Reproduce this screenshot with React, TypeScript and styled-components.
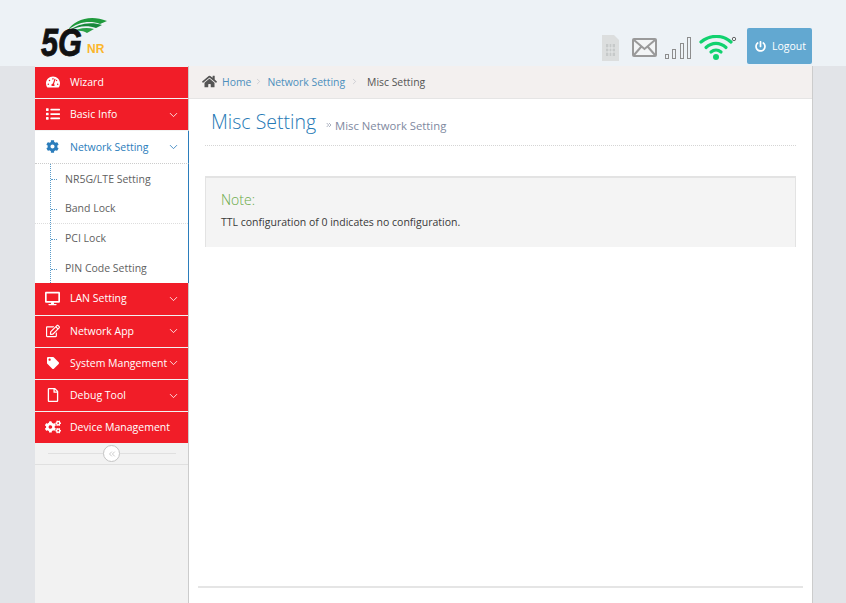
import { ReactNode } from "react";
import styled, { createGlobalStyle } from "styled-components";
import { ChevronDown, ChevronRight, ChevronsLeft, ChevronsRight } from "lucide-react";
import {
  FaCog,
  FaCogs,
  FaDesktop,
  FaHome,
  FaList,
  FaPowerOff,
  FaRegEdit,
  FaRegFile,
  FaTachometerAlt,
  FaTag,
} from "react-icons/fa";

const GlobalStyle = createGlobalStyle`
  html, body {
    margin: 0;
    padding: 0;
    height: 100%;
    overflow: hidden;
    background: #e2e4e8;
    font-family: "Open Sans", "Liberation Sans", sans-serif;
    font-size: 10.5px;
  }
  * { box-sizing: border-box; }
`;

const Page = styled.div`
  width: 846px;
  height: 603px;
  display: flex;
  flex-direction: column;
  overflow: hidden;
`;

const Header = styled.header`
  height: 66px;
  flex: none;
  background: #edf2f6;
  display: flex;
  justify-content: space-between;
  padding: 0 34px 0 40px;
`;

const Logo = styled.svg`
  width: 70px;
  height: 46px;
  margin-top: 15px;
`;

const LogoFive = styled.text`
  font-family: "Liberation Sans", sans-serif;
  font-weight: 700;
  font-style: italic;
  font-size: 38px;
  fill: #111;
  stroke: #111;
  stroke-width: 0.8px;
`;

const LogoNr = styled.text`
  font-family: "Liberation Sans", sans-serif;
  font-weight: 700;
  font-size: 12px;
  fill: #fbb62c;
`;

const Tools = styled.div`
  display: flex;
  align-items: flex-start;
  padding-top: 28px;
`;

const ToolIcon = styled.svg<{ $left: number; $top: number }>`
  display: block;
  flex: none;
  margin-left: ${(p) => p.$left}px;
  margin-top: ${(p) => p.$top}px;
`;

const LogoutButton = styled.button`
  width: 65px;
  height: 36px;
  margin-left: 10px;
  border: 0;
  border-radius: 2px;
  background: #62a8d1;
  color: #fff;
  font: inherit;
  font-size: 10.5px;
  display: flex;
  align-items: center;
  justify-content: center;
  gap: 6px;
  padding: 0 0 0 2px;
`;

const Body = styled.div`
  flex: 1;
  width: 778px;
  margin-left: 35px;
  display: flex;
  min-height: 0;
`;

const Sidebar = styled.aside`
  width: 154px;
  flex: none;
  background: #f2f2f2;
  border-right: 1px solid #ccc;
  padding-top: 1px;
`;

const NavRow = styled.div<{ $active?: boolean }>`
  height: ${(p) => (p.$active ? 32 : 31.2)}px;
  margin-bottom: ${(p) => (p.$active ? 0 : 1)}px;
  padding-bottom: 1px;
  display: flex;
  align-items: center;
  background: ${(p) => (p.$active ? "#fff" : "#f11d28")};
  color: ${(p) => (p.$active ? "#2b7dbc" : "#fff")};
  border-right: ${(p) => (p.$active ? "1px solid #2b7dbc" : "0")};
  position: relative;
  width: ${(p) => (p.$active ? 154 : 153)}px;
`;

const NavIcon = styled.span<{ $size?: number }>`
  width: 35px;
  flex: none;
  display: flex;
  justify-content: center;
  font-size: ${(p) => p.$size ?? 14}px;
`;

const NavLabel = styled.span`
  flex: 1;
  white-space: nowrap;
  font-size: 10.5px;
`;

const NavCaret = styled.span`
  position: absolute;
  right: 8px;
  top: 50%;
  transform: translateY(-50%);
  display: flex;
`;

const SubList = styled.div`
  width: 154px;
  background: #fff;
  border-top: 1px dotted #ccc;
  border-right: 1px solid #2b7dbc;
  position: relative;
  &::before {
    content: "";
    position: absolute;
    left: 15px;
    top: 0;
    bottom: 0;
    border-left: 1px dotted #5a9bc9;
  }
`;

const SubRow = styled.div<{ $rule?: boolean }>`
  height: 29.75px;
  padding: 0 0 1px 30px;
  display: flex;
  align-items: center;
  color: #616161;
  font-size: 10.5px;
  position: relative;
  border-bottom: ${(p) => (p.$rule ? "1px dotted #ddd" : "0")};
  &::before {
    content: "";
    position: absolute;
    left: 16px;
    top: 50%;
    width: 6px;
    border-top: 1px dotted #5a9bc9;
  }
`;

const Collapse = styled.div`
  height: 22px;
  width: 153px;
  margin-top: -1px;
  border-bottom: 1px solid #e0e0e0;
  display: flex;
  align-items: center;
  justify-content: center;
  position: relative;
  &::before {
    content: "";
    position: absolute;
    left: 13px;
    right: 12px;
    top: 10px;
    border-top: 1px solid #e0e0e0;
  }
`;

const CollapseKnob = styled.span`
  position: relative;
  width: 17px;
  height: 17px;
  border-radius: 50%;
  border: 1px solid #c4c4c4;
  background: #fff;
  color: #aaa;
  display: flex;
  align-items: center;
  justify-content: center;
`;

const Main = styled.main`
  flex: 1;
  min-width: 0;
  background: #fff;
  border-right: 1px solid #ccc;
  display: flex;
  flex-direction: column;
`;

const Crumbs = styled.nav`
  height: 33px;
  flex: none;
  background: #f3f0ef;
  border-bottom: 1px solid #e5e5e5;
  display: flex;
  align-items: center;
  padding: 0 0 1px 13px;
  font-size: 10.4px;
  color: #555;
  white-space: nowrap;
`;

const CrumbHome = styled.span`
  display: flex;
  color: #555;
  font-size: 15px;
  margin-right: 5px;
`;

const CrumbLink = styled.span`
  color: #4c8fbd;
`;

const CrumbSep = styled.span<{ $wide?: boolean }>`
  display: flex;
  color: #b2b6bf;
  margin: 0 ${(p) => (p.$wide ? 8 : 4)}px 0 ${(p) => (p.$wide ? 5 : 3)}px;
`;

const Content = styled.div`
  flex: 1;
  padding: 0 16px;
  display: flex;
  flex-direction: column;
`;

const PageHead = styled.div`
  height: 47px;
  padding: 8px 0 0 6px;
  border-bottom: 1px dotted #d5d5d5;
  display: flex;
  align-items: baseline;
  white-space: nowrap;
`;

const Title = styled.h1`
  margin: 0;
  font-size: 19.5px;
  font-weight: 300;
  line-height: 30px;
  color: #2679b5;
`;

const SubTitle = styled.small`
  margin-left: 9px;
  font-size: 11.3px;
  color: #8089a0;
  display: flex;
  align-items: center;
  gap: 2px;
`;

const Note = styled.section`
  margin-top: 30px;
  height: 71px;
  background: #f4f4f4;
  border: 1px solid #e3e3e3;
  border-bottom: 0;
  border-top-width: 2px;
  padding: 12px 15px;
`;

const NoteTitle = styled.h3`
  margin: 0;
  font-size: 14px;
  line-height: 20px;
  font-weight: 300;
  color: #69aa46;
`;

const NoteText = styled.p`
  margin: 5px 0 0;
  font-size: 10.5px;
  line-height: 15px;
  color: #393939;
`;

const Footer = styled.div`
  margin: auto -7px 15px -7px;
  border-top: 2px solid #e5e5e5;
  height: 0;
`;

type NavItem = { label: string; icon: ReactNode; caret?: boolean; iconSize?: number };

const topItems: NavItem[] = [
  { label: "Wizard", icon: <FaTachometerAlt /> },
  { label: "Basic Info", icon: <FaList />, caret: true },
];

const bottomItems: NavItem[] = [
  { label: "LAN Setting", icon: <FaDesktop />, iconSize: 15, caret: true },
  { label: "Network App", icon: <FaRegEdit />, caret: true },
  { label: "System Mangement", icon: <FaTag />, iconSize: 12, caret: true },
  { label: "Debug Tool", icon: <FaRegFile />, caret: true },
  { label: "Device Management", icon: <FaCogs />, iconSize: 16 },
];

const subItems = [
  { label: "NR5G/LTE Setting" },
  { label: "Band Lock", rule: true },
  { label: "PCI Lock" },
  { label: "PIN Code Setting" },
];

function Nav({ item }: { item: NavItem }) {
  return (
    <NavRow>
      <NavIcon $size={item.iconSize}>{item.icon}</NavIcon>
      <NavLabel>{item.label}</NavLabel>
      {item.caret && (
        <NavCaret>
          <ChevronDown size={13} strokeWidth={1.5} />
        </NavCaret>
      )}
    </NavRow>
  );
}

function App() {
  return (
    <Page>
      <GlobalStyle />
      <Header>
        <Logo viewBox="0 0 70 46">
          <path d="M28 15C34 5 50 -1 67 6L60 9C50 5 38 7 28 15Z" fill="#1f9a3c" />
          <path d="M29 16C37 9 50 6 62 10L56 13C47 10 38 11 29 16Z" fill="#17873a" />
          <path d="M30 18C37 13 47 12 54 14L47 18C42 15 36 15 30 18Z" fill="#2aa046" />
          <LogoFive x="1" y="41" textLength="41" lengthAdjust="spacingAndGlyphs">
            5G
          </LogoFive>
          <LogoNr x="47" y="38">
            NR
          </LogoNr>
        </Logo>
        <Tools>
          {/* sim card */}
          <ToolIcon $left={0} $top={7} width="19" height="26" viewBox="0 0 19 26">
            <path d="M1 0h12l5 5v21H1z" fill="#dcdede" />
            <path d="M5 9h9v12H5z" fill="#c6c9c9" />
            <path d="M8 9v12M11 9v12M5 13h9M5 17h9" stroke="#e6e8e8" strokeWidth="1" />
          </ToolIcon>
          {/* mail */}
          <ToolIcon $left={12} $top={10} width="25" height="20" viewBox="0 0 25 20">
            <rect x="1" y="1" width="23" height="17" rx="1" fill="#f3f5f6" stroke="#9a9a9a" strokeWidth="2" />
            <path d="M2 2l10.500 9L23 2M2 17l7-8M23 17l-7-8" fill="none" stroke="#9a9a9a" strokeWidth="2" />
          </ToolIcon>
          {/* signal bars */}
          <ToolIcon $left={8} $top={9} width="27" height="23" viewBox="0 0 27 23">
            <g fill="none" stroke="#8d8d8d" strokeWidth="1">
              <rect x="0.500" y="17.500" width="3" height="4" />
              <rect x="7.500" y="12.500" width="3" height="9" />
              <rect x="15.500" y="6.500" width="3" height="15" />
              <rect x="22.500" y="0.500" width="3" height="21" />
            </g>
          </ToolIcon>
          {/* wifi */}
          <ToolIcon $left={7} $top={7} width="38" height="26" viewBox="0 0 38 26">
            <g fill="none" stroke="#12d26f" strokeWidth="3.200" strokeLinecap="round">
              <path d="M2 7C11 -0.500 24 -0.500 32 7" />
              <path d="M7 12.500C13 7 21 7 27 12.500" />
              <path d="M12 17C15 14.500 19 14.500 22 17" />
            </g>
            <circle cx="17" cy="22" r="3" fill="#12d26f" />
            <circle cx="35" cy="4" r="1.700" fill="none" stroke="#666" strokeWidth="1" />
          </ToolIcon>
          <LogoutButton>
            <FaPowerOff size={11} />
            Logout
          </LogoutButton>
        </Tools>
      </Header>
      <Body>
        <Sidebar>
          {topItems.map((item) => (
            <Nav key={item.label} item={item} />
          ))}
          <NavRow $active>
            <NavIcon $size={13}>
              <FaCog />
            </NavIcon>
            <NavLabel>Network Setting</NavLabel>
            <NavCaret>
              <ChevronDown size={13} strokeWidth={1.5} />
            </NavCaret>
          </NavRow>
          <SubList>
            {subItems.map((s) => (
              <SubRow key={s.label} $rule={s.rule}>
                {s.label}
              </SubRow>
            ))}
          </SubList>
          {bottomItems.map((item) => (
            <Nav key={item.label} item={item} />
          ))}
          <Collapse>
            <CollapseKnob>
              <ChevronsLeft size={10} strokeWidth={1.5} />
            </CollapseKnob>
          </Collapse>
        </Sidebar>
        <Main>
          <Crumbs>
            <CrumbHome>
              <FaHome />
            </CrumbHome>
            <CrumbLink>Home</CrumbLink>
            <CrumbSep>
              <ChevronRight size={9} strokeWidth={1.5} />
            </CrumbSep>
            <CrumbLink>Network Setting</CrumbLink>
            <CrumbSep $wide>
              <ChevronRight size={9} strokeWidth={1.5} />
            </CrumbSep>
            Misc Setting
          </Crumbs>
          <Content>
            <PageHead>
              <Title>Misc Setting</Title>
              <SubTitle>
                <ChevronsRight size={8} strokeWidth={2} />
                Misc Network Setting
              </SubTitle>
            </PageHead>
            <Note>
              <NoteTitle>Note:</NoteTitle>
              <NoteText>TTL configuration of 0 indicates no configuration.</NoteText>
            </Note>
            <Footer />
          </Content>
        </Main>
      </Body>
    </Page>
  );
}

export default App;
